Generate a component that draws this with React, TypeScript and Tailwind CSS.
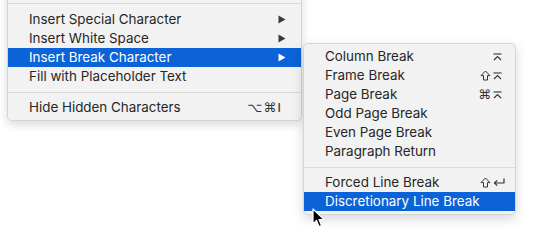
import type { ReactNode } from 'react';

const font = { fontFamily: 'Inter, "Noto Sans", "DejaVu Sans", sans-serif' };

function Arrow({ active }: { active?: boolean }) {
  return (
    <svg width="8" height="9" viewBox="0 0 8 9" className="shrink-0">
      <path d="M0.5 0.5 L7.5 4.5 L0.5 8.5 Z" fill={active ? '#ffffff' : '#3a3a3a'} />
    </svg>
  );
}

function EnterKey() {
  return (
    <svg width="9" height="8" viewBox="0 0 9 8" fill="none" stroke="#333" strokeWidth="1.1">
      <path d="M0.5 1 H8.5" />
      <path d="M1 7 L4.5 3.5 L8 7" />
    </svg>
  );
}

function ShiftKey() {
  return (
    <svg width="11" height="11" viewBox="0 0 11 11" fill="none" stroke="#333" strokeWidth="1" strokeLinejoin="round">
      <path d="M5.5 1 L10 5.6 L7.5 5.6 L7.5 10 L3.5 10 L3.5 5.6 L1 5.6 Z" />
    </svg>
  );
}

function ReturnKey() {
  return (
    <svg width="12" height="9" viewBox="0 0 12 9" fill="none" stroke="#333" strokeWidth="1.2" strokeLinejoin="round">
      <path d="M11 0.5 V5 H1.5" />
      <path d="M4.2 2.3 L1.5 5 L4.2 7.7" />
    </svg>
  );
}

function Row({
  label,
  active,
  right,
  pr = 'pr-[15px]',
}: {
  label: string;
  active?: boolean;
  right?: ReactNode;
  pr?: string;
}) {
  return (
    <div
      className={`flex h-[19px] items-center justify-between pl-[21px] ${pr} text-[13.4px] leading-none ${
        active ? 'bg-[#0b63d7] text-white' : 'text-[#262626]'
      }`}
    >
      <span>{label}</span>
      {right}
    </div>
  );
}

function Keys({ children }: { children: ReactNode }) {
  return <span className="flex items-center gap-[2px] text-[13px] text-[#333333]">{children}</span>;
}

function Separator() {
  return (
    <div className="flex h-[12px] items-center">
      <div className="h-px w-full bg-[#dadada]" />
    </div>
  );
}

function Cursor() {
  return (
    <svg
      width="14"
      height="20"
      viewBox="0 0 14 20"
      className="absolute left-[312px] top-[208px]"
    >
      <path
        d="M1 1 L1 16 L4.5 12.5 L7 18.5 L9.5 17.5 L7 11.5 L12 11.5 Z"
        fill="#000"
        stroke="#fff"
        strokeWidth="1.2"
        strokeLinejoin="round"
      />
    </svg>
  );
}

export default function App() {
  return (
    <div className="relative h-[244px] w-[538px] overflow-hidden bg-white" style={font}>
      <div className="flex items-start">
        {/* Main menu */}
        <div className="ml-[7px] mt-[-20px] w-[295px] rounded-b-[5px] border border-t-0 border-[#d4d4d4] bg-[#f2f2f2] pb-[3px] shadow-[0_4px_10px_rgba(0,0,0,0.14)]">
          <div className="h-[23px]" />
          <div className="h-px bg-[#dadada]" />
          <div className="h-[6px]" />
          <Row label="Insert Special Character" right={<Arrow />} />
          <Row label="Insert White Space" right={<Arrow />} />
          <Row label="Insert Break Character" active right={<Arrow active />} />
          <Row label="Fill with Placeholder Text" />
          <Separator />
          <Row
            label="Hide Hidden Characters"
            pr="pr-[19px]"
            right={
              <span
                className="text-[13px] tracking-[1px] text-[#333333]"
                style={{ fontFamily: '"DejaVu Sans", sans-serif' }}
              >
                ⌥⌘I
              </span>
            }
          />
        </div>

        {/* Break character submenu */}
        <div className="ml-px mt-[43px] w-[213px] rounded-[5px] border border-[#d4d4d4] bg-[#f2f2f2] py-[3px] shadow-[0_4px_12px_rgba(0,0,0,0.16)]">
          <Row label="Column Break" pr="pr-[13px]" right={<Keys><EnterKey /></Keys>} />
          <Row label="Frame Break" pr="pr-[13px]" right={<Keys><ShiftKey /><EnterKey /></Keys>} />
          <Row
            label="Page Break"
            pr="pr-[13px]"
            right={
              <Keys>
                <span style={{ fontFamily: '"DejaVu Sans", sans-serif' }}>⌘</span>
                <EnterKey />
              </Keys>
            }
          />
          <Row label="Odd Page Break" />
          <Row label="Even Page Break" />
          <Row label="Paragraph Return" />
          <Separator />
          <Row label="Forced Line Break" pr="pr-[10px]" right={<Keys><ShiftKey /><ReturnKey /></Keys>} />
          <Row label="Discretionary Line Break" active />
        </div>
      </div>
      <Cursor />
    </div>
  );
}
